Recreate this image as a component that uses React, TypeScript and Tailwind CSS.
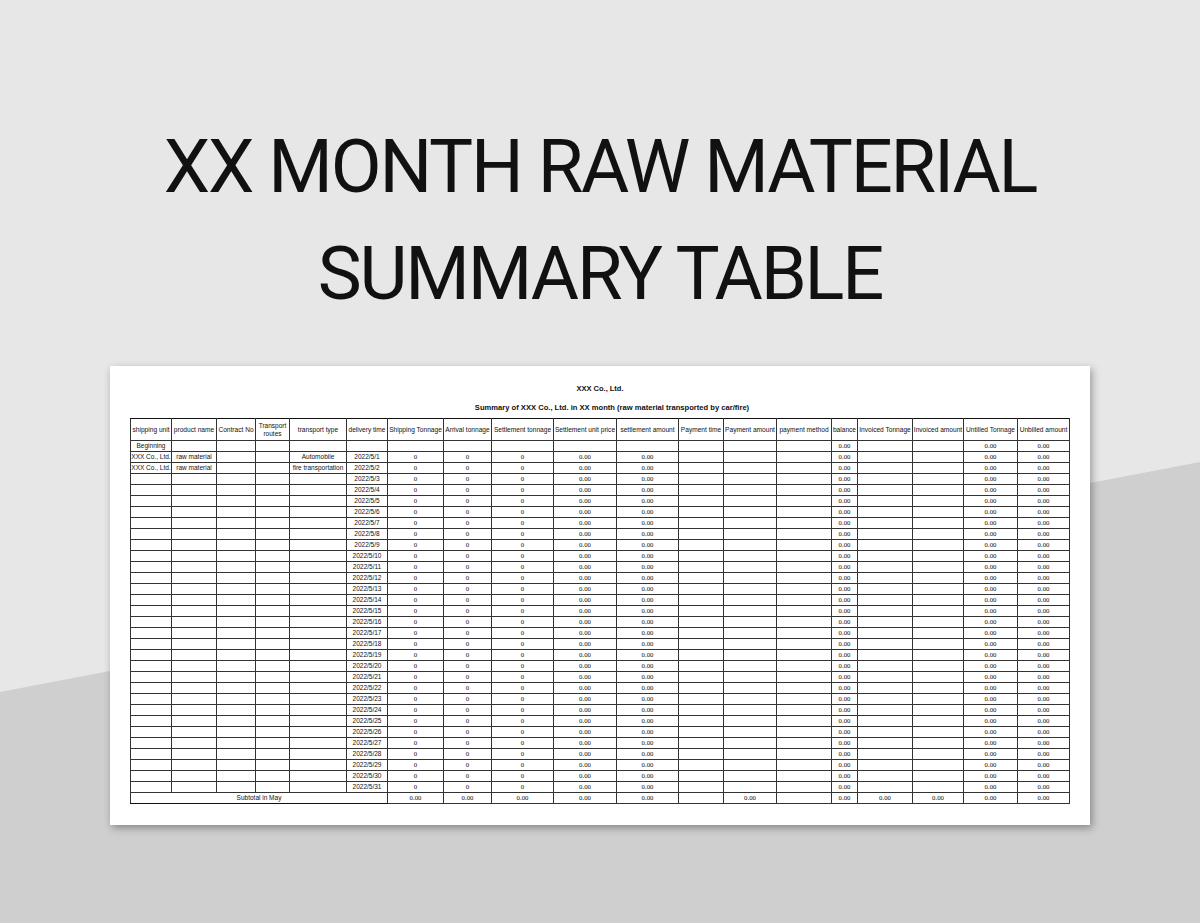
import React from "react";

const cols = [41, 45, 39, 34, 57, 41, 56, 48, 62, 63, 62, 45, 53, 55, 26, 55, 51, 54, 52];

const headers = [
  "shipping unit",
  "product name",
  "Contract No",
  "Transport routes",
  "transport type",
  "delivery time",
  "Shipping Tonnage",
  "Arrival tonnage",
  "Settlement tonnage",
  "Settlement unit price",
  "settlement amount",
  "Payment time",
  "Payment amount",
  "payment method",
  "balance",
  "Invoiced Tonnage",
  "Invoiced amount",
  "Untilled Tonnage",
  "Unbilled amount",
];

function Cell({ text, serif }: { text: string; serif?: boolean }) {
  return (
    <td className="border border-[#333] p-0 h-[11px]">
      <div className="flex h-[10px] items-center justify-center overflow-hidden">
        <span
          className={
            serif
              ? "shrink-0 whitespace-nowrap font-['Liberation_Serif',serif] text-[6.8px] leading-[10px] text-[#111]"
              : "shrink-0 whitespace-nowrap font-['Liberation_Sans',sans-serif] text-[6.5px] leading-[10px] text-[#111]"
          }
        >
          {text}
        </span>
      </div>
    </td>
  );
}

export default function App() {
  const days = Array.from({ length: 31 }, (_, i) => i + 1);
  return (
    <div className="relative h-[923px] w-[1200px] overflow-hidden bg-[#e7e7e7]">
      <div className="absolute inset-0 bg-[#cfcfcf] [clip-path:polygon(0_692px,100%_462px,100%_100%,0_100%)]" />
      <div className="relative flex flex-col items-center pt-[113px]">
        <h1 className="text-center font-['Roboto',sans-serif] text-[74px] font-normal leading-[107px] tracking-[-2.2px] text-[#111]">
          XX MONTH RAW MATERIAL
          <br />
          SUMMARY TABLE
        </h1>
        <div className="mt-[39px] flex w-[980px] flex-col items-center bg-white pt-[17px] pb-[21px] shadow-[2px_3px_8px_rgba(0,0,0,0.35)]">
          <div className="h-[12px] font-['Liberation_Sans',sans-serif] text-[7.5px] font-bold leading-[12px] text-[#111]">
            XXX Co., Ltd.
          </div>
          <div className="mt-[7px] h-[12px] pl-[24px] font-['Liberation_Sans',sans-serif] text-[7.6px] font-bold leading-[12px] text-[#111]">
            Summary of XXX Co., Ltd. in XX month (raw material transported by car/fire)
          </div>
          <table className="mt-[4px] w-[939px] table-fixed border-collapse border border-[#111]">
            <colgroup>
              {cols.map((w, i) => (
                <col key={i} style={{ width: w }} />
              ))}
            </colgroup>
            <thead>
              <tr>
                {headers.map((h, i) => (
                  <th key={i} className="h-[22px] border border-[#333] border-t-[#111] p-0 font-normal">
                    {i === 3 ? (
                      <div className="font-['Liberation_Sans',sans-serif] text-[6.5px] leading-[8px] text-[#111]">
                        Transport
                        <br />
                        routes
                      </div>
                    ) : (
                      <div className="flex items-center justify-center overflow-hidden">
                        <span className="shrink-0 whitespace-nowrap font-['Liberation_Sans',sans-serif] text-[6.6px] leading-[10px] text-[#111]">
                          {h}
                        </span>
                      </div>
                    )}
                  </th>
                ))}
              </tr>
            </thead>
            <tbody>
              <tr>
                <Cell text="Beginning" />
                {Array.from({ length: 13 }).map((_, i) => (
                  <Cell key={i} text="" />
                ))}
                <Cell text="0.00" serif />
                <Cell text="" />
                <Cell text="" />
                <Cell text="0.00" serif />
                <Cell text="0.00" serif />
              </tr>
              {days.map((d) => (
                <tr key={d}>
                  <Cell text={d <= 2 ? "XXX Co., Ltd." : ""} />
                  <Cell text={d <= 2 ? "raw material" : ""} />
                  <Cell text="" />
                  <Cell text="" />
                  <Cell text={d === 1 ? "Automobile" : d === 2 ? "fire transportation" : ""} />
                  <Cell text={`2022/5/${d}`} />
                  <Cell text="0" serif />
                  <Cell text="0" serif />
                  <Cell text="0" serif />
                  <Cell text="0.00" serif />
                  <Cell text="0.00" serif />
                  <Cell text="" />
                  <Cell text="" />
                  <Cell text="" />
                  <Cell text="0.00" serif />
                  <Cell text="" />
                  <Cell text="" />
                  <Cell text="0.00" serif />
                  <Cell text="0.00" serif />
                </tr>
              ))}
              <tr>
                <td colSpan={6} className="h-[11px] border border-[#333] border-b-[#111] p-0 text-center font-['Liberation_Sans',sans-serif] text-[6.5px] leading-[10px] text-[#111]">
                  Subtotal in May
                </td>
                <Cell text="0.00" serif />
                <Cell text="0.00" serif />
                <Cell text="0.00" serif />
                <Cell text="0.00" serif />
                <Cell text="0.00" serif />
                <Cell text="" />
                <Cell text="0.00" serif />
                <Cell text="" />
                <Cell text="0.00" serif />
                <Cell text="0.00" serif />
                <Cell text="0.00" serif />
                <Cell text="0.00" serif />
                <Cell text="0.00" serif />
              </tr>
            </tbody>
          </table>
        </div>
      </div>
    </div>
  );
}
